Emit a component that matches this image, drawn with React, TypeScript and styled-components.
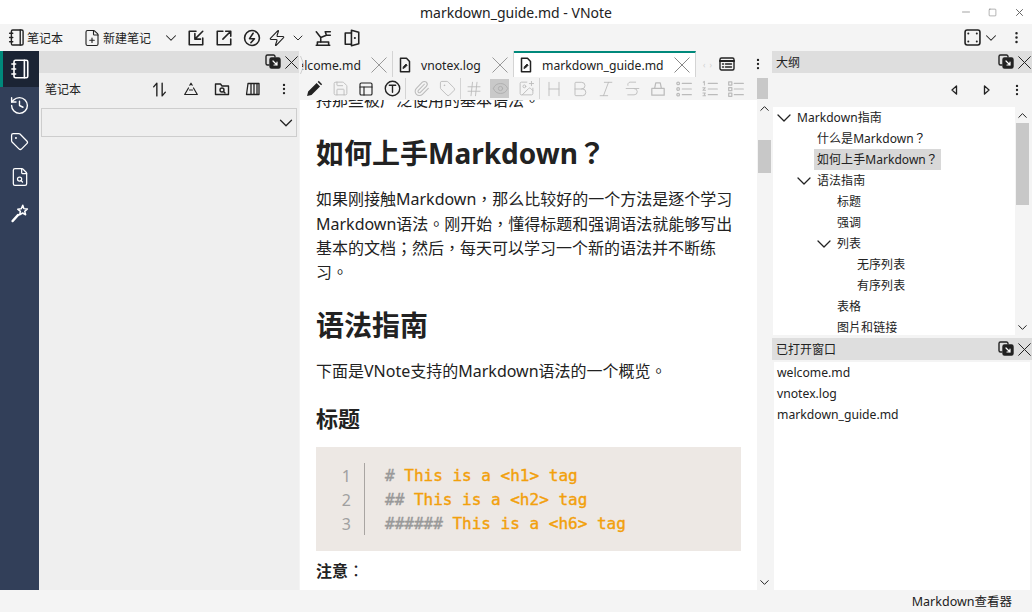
import * as React from "react";
import styled, { createGlobalStyle } from "styled-components";
import {
  ChevronDown,
  ChevronUp,
  EllipsisVertical,
  Eye,
  FilePlus,
  Hash,
  ImagePlus,
  Minus,
  Paperclip,
  Save,
  Square,
  Tag,
  Zap,
  History,
  FileSearch,
  PanelsTopLeft,
  Strikethrough,
  Italic,
  Bold,
  Heading,
} from "lucide-react";

const GlobalStyle = createGlobalStyle`
  html, body {
    margin: 0;
    padding: 0;
    width: 1032px;
    height: 612px;
    overflow: hidden;
    background: #f4f4f4;
    font-family: "Noto Sans", "Noto Sans CJK TC", sans-serif;
    color: #222;
  }
  svg {
    flex: none;
  }
`;

const Window = styled.div`
  width: 1032px;
  height: 612px;
  display: flex;
  flex-direction: column;
  overflow: hidden;
`;

const TitleBar = styled.div`
  position: relative;
  height: 24px;
  flex: none;
  background: #fff;
  display: flex;
  align-items: center;
  justify-content: center;
  font-size: 14px;
`;

const WindowButtons = styled.div`
  position: absolute;
  right: -1px;
  top: 3px;
  display: flex;
  color: #666;
`;

const WindowButton = styled.span`
  width: 27px;
  height: 18px;
  display: flex;
  align-items: center;
  justify-content: center;
`;

const ToolBar = styled.div`
  height: 27px;
  flex: none;
  display: flex;
  align-items: center;
  padding-left: 8px;
  color: #222;
`;

const ToolText = styled.span`
  font-size: 12px;
  margin-left: 2px;
  white-space: nowrap;
`;

const ToolSlot = styled.span<{ $w?: number; $ml?: number }>`
  width: ${(p) => p.$w ?? 28}px;
  margin-left: ${(p) => p.$ml ?? 0}px;
  flex: none;
  display: flex;
  align-items: center;
  justify-content: center;
`;

const Spacer = styled.div`
  flex: 1;
`;

const Main = styled.div`
  flex: 1;
  min-height: 0;
  display: flex;
`;

const ActivityBar = styled.div`
  width: 39px;
  flex: none;
  background: #323f59;
  display: flex;
  flex-direction: column;
`;

const ActivityItem = styled.div<{ $active?: boolean }>`
  height: 36px;
  flex: none;
  display: flex;
  align-items: center;
  justify-content: center;
  color: #fff;
  background: ${(p) => (p.$active ? "#1b2434" : "transparent")};
  border-left: 3px solid ${(p) => (p.$active ? "#00897b" : "transparent")};
  padding-right: 3px;
  box-sizing: border-box;
`;

const NavDock = styled.div`
  width: 260px;
  flex: none;
  background: #efefef;
  display: flex;
  flex-direction: column;
  margin-right: 1px;
`;

const DockHeader = styled.div`
  height: 22px;
  flex: none;
  background: #dedede;
  display: flex;
  align-items: center;
  padding-left: 4px;
  font-size: 12px;
  color: #222;
`;

const DockTitle = styled.span`
  flex: 1;
`;

const DockAction = styled.span`
  width: 18px;
  flex: none;
  display: flex;
  justify-content: center;
  &:last-child {
    margin-right: -1px;
  }
`;

const NavTools = styled.div`
  height: 35px;
  flex: none;
  box-sizing: border-box;
  display: flex;
  align-items: center;
  padding: 0 0 3px 6px;
  font-size: 12px;
`;

const NavLabel = styled.span`
  flex: 1;
`;

const NavTool = styled.span`
  width: 31px;
  flex: none;
  display: flex;
  justify-content: center;
`;

const Combo = styled.div`
  height: 27px;
  margin: 0 2px;
  border: 1px solid #cdcdcd;
  display: flex;
  align-items: center;
  justify-content: flex-end;
  svg {
    margin-right: -1px;
  }
`;

const EditorArea = styled.div`
  width: 472px;
  flex: none;
  display: flex;
  flex-direction: column;
  overflow: hidden;
`;

const TabBar = styled.div`
  position: relative;
  height: 26px;
  flex: none;
  display: flex;
  overflow: hidden;
`;

const EditorTab = styled.div<{ $active?: boolean; $width: number }>`
  width: ${(p) => p.$width}px;
  flex: none;
  display: flex;
  align-items: center;
  box-sizing: border-box;
  padding: ${(p) => (p.$active ? "0" : "2px")} 5px 0 4px;
  background: ${(p) => (p.$active ? "#fff" : "#f4f4f4")};
  border-top: ${(p) => (p.$active ? "2px solid #00897b" : "0")};
  border-right: 1px solid #d4d4d4;
  font-size: 12.2px;
  color: #222;
`;

const TabName = styled.span`
  flex: 1;
  min-width: 0;
  white-space: nowrap;
  padding-left: 8px;
`;

const ClippedTabName = styled.span`
  flex: 1;
  min-width: 0;
  margin-left: -4px;
  padding-right: 10px;
  display: flex;
  justify-content: flex-end;
  overflow: hidden;
  white-space: nowrap;
`;

const TabScrollHint = styled.span`
  position: absolute;
  left: 0;
  top: 0;
  width: 2px;
  height: 26px;
  background: #f4f4f4;
  color: #cfcfcf;
  svg {
    position: absolute;
    left: 0;
    top: 4px;
  }
`;

const TabTail = styled.div`
  flex: 1;
  display: flex;
  align-items: center;
  color: #222;
`;

const FaintArrows = styled.span`
  width: 23px;
  flex: none;
  display: flex;
  justify-content: center;
  gap: 4px;
  font-size: 8px;
  color: #d0d0d0;
`;

const EditorToolBar = styled.div`
  height: 23px;
  flex: none;
  display: flex;
  align-items: center;
  padding-left: 1px;
  background: #f4f4f4;
`;

const EdButton = styled.span<{ $on?: boolean; $faint?: boolean }>`
  width: 26px;
  height: 19px;
  flex: none;
  display: flex;
  align-items: center;
  justify-content: center;
  color: ${(p) => (p.$faint ? "#bbb" : "#222")};
  position: relative;
  &::before {
    content: "";
    position: absolute;
    left: 3px;
    right: 4px;
    top: 0;
    bottom: 0;
    background: ${(p) => (p.$on ? "#c9c9c9" : "transparent")};
  }
  svg {
    position: relative;
  }
`;

const EdSep = styled.span<{ $gap: number }>`
  width: 1px;
  height: 21px;
  flex: none;
  background: #d4d4d4;
  margin-right: ${(p) => p.$gap}px;
`;

const ToolThumb = styled.span`
  margin-left: auto;
  width: 11px;
  height: 21px;
  margin-right: 4px;
  background: #c8c8c8;
`;

const EditorBody = styled.div`
  flex: 1;
  min-height: 0;
  display: flex;
`;

const Page = styled.div`
  flex: 1;
  background: #fff;
  overflow: hidden;
  padding: 0 16px;
  color: #222;
  font-size: 16px;
  line-height: 24.3px;
`;

const PageInner = styled.div`
  margin-top: -12px;
`;

const Para = styled.p`
  margin: 0 0 16px;
`;

const H1 = styled.h1`
  font-size: 28px;
  line-height: 38px;
  font-weight: 700;
  margin: 22px 0 15px;
`;

const H2 = styled.h2`
  font-size: 22px;
  line-height: 30px;
  font-weight: 700;
  margin: 19px 0 14px;
`;

const CodeBlock = styled.div`
  background: #ede8e4;
  height: 104px;
  box-sizing: border-box;
  padding-top: 16px;
  display: flex;
  margin-bottom: 8px;
`;

const LineNumbers = styled.div`
  width: 49px;
  height: 72px;
  box-sizing: border-box;
  padding: 1px 13px 0 0;
  border-right: 1px solid #a9a5a2;
  text-align: right;
  color: #a0a0a0;
  font-size: 16px;
  line-height: 24px;
`;

const CodeLines = styled.div`
  padding: 1px 0 0 20px;
  font-family: "DejaVu Sans Mono", monospace;
  font-size: 16px;
  line-height: 24px;
  color: #f2a00c;
  -webkit-text-stroke: 0.4px currentColor;
  white-space: pre;
`;

const Hashes = styled.span`
  color: #999;
`;

const Scroller = styled.div`
  width: 15px;
  flex: none;
  background: #f4f4f4;
  display: flex;
  flex-direction: column;
  align-items: center;
  color: #222;
  overflow: hidden;
`;

const ScrollArrow = styled.span`
  height: 16px;
  flex: none;
  display: flex;
  align-items: center;
`;

const ScrollThumb = styled.span<{ $top: number; $h: number }>`
  width: 13px;
  height: ${(p) => p.$h}px;
  margin-top: ${(p) => p.$top}px;
  flex: none;
  background: #c8c8c8;
`;

const ScrollFill = styled.span`
  flex: 1;
`;

const RightColumn = styled.div`
  flex: 1;
  min-width: 0;
  display: flex;
  flex-direction: column;
`;

const OutlineTools = styled.div`
  height: 34px;
  flex: none;
  display: flex;
  align-items: center;
  justify-content: flex-end;
  color: #222;
`;

const OutlineTool = styled.span`
  width: 31px;
  flex: none;
  display: flex;
  justify-content: center;
`;

const OutlineBody = styled.div`
  height: 228px;
  flex: none;
  margin-left: 1px;
  margin-right: 2px;
  display: flex;
  background: #fff;
`;

const Tree = styled.div`
  flex: 1;
  overflow: hidden;
  font-size: 12px;
`;

const TreeRow = styled.div<{ $level: number }>`
  height: 21px;
  display: flex;
  align-items: center;
  padding-left: ${(p) => 4 + p.$level * 20}px;
  color: #222;
`;

const TreeCaret = styled.span`
  width: 20px;
  flex: none;
  display: flex;
  margin-left: -1px;
  svg {
    margin-left: -4px;
  }
`;

const TreeLabel = styled.span<{ $selected?: boolean }>`
  padding: 0 3px;
  margin-left: -2px;
  height: 21px;
  line-height: 21px;
  background: ${(p) => (p.$selected ? "#d8d8d8" : "transparent")};
  white-space: nowrap;
  letter-spacing: 0.05px;
`;

const OpenDock = styled.div`
  flex: 1;
  margin-top: 3px;
  display: flex;
  flex-direction: column;
`;

const OpenList = styled.div`
  flex: 1;
  background: #fff;
  margin: 2px 2px 0 2px;
  font-size: 12.2px;
  padding-left: 3px;
`;

const OpenItem = styled.div`
  height: 21px;
  line-height: 21px;
  color: #222;
`;

const StatusBar = styled.div`
  height: 22px;
  flex: none;
  display: flex;
  align-items: center;
  justify-content: flex-end;
  padding: 0 20px 2px 0;
  box-sizing: border-box;
  font-size: 12.5px;
  color: #222;
`;

const Glyph: React.FC<{ size?: number; sw?: number; children: React.ReactNode }> = ({
  size = 16,
  sw = 1.4,
  children,
}) => (
  <svg
    width={size}
    height={size}
    viewBox="0 0 16 16"
    fill="none"
    stroke="currentColor"
    strokeWidth={sw}
    strokeLinecap="round"
    strokeLinejoin="round"
  >
    {children}
  </svg>
);

const CrossIcon: React.FC<{ size: number; color?: string }> = ({ size, color = "#222" }) => (
  <svg width={size} height={size} viewBox="0 0 16 16" stroke={color} strokeWidth={16 / size} fill="none">
    <path d="M.5 .5l15 15M15.5 .5l-15 15" />
  </svg>
);

const NotebookIcon: React.FC<{ size: number }> = ({ size }) => (
  <Glyph size={size} sw={1.3}>
    <rect x="3.2" y="1" width="11" height="14" rx="1.2" />
    <path d="M11.5 1v14M1.5 4h3M1.5 8h3M1.5 12h3" />
  </Glyph>
);

const WandIcon = () => (
  <Glyph size={20} sw={1.2}>
    <path d="M10.2 1.8l.9 2.7 2.8.3-2.1 1.9.7 2.7-2.4-1.4-2.4 1.5.6-2.8-2.1-1.8 2.8-.3z" />
    <path d="M6.5 9.5l-4.5 5" strokeWidth="1.8" />
  </Glyph>
);

const FloatIcon = () => (
  <Glyph>
    <path d="M10 3V2.5A1.5 1.5 0 0 0 8.5 1h-6A1.5 1.5 0 0 0 1 2.5v7A1.5 1.5 0 0 0 2.5 11H4" />
    <rect x="5" y="4" width="10" height="10" rx="1.5" fill="currentColor" />
    <path d="M8 7l4 4M12 8v3H9" stroke="#fff" strokeWidth="1.2" />
  </Glyph>
);

const DockButtons = () => (
  <>
    <DockAction>
      <FloatIcon />
    </DockAction>
    <DockAction>
      <CrossIcon size={13} />
    </DockAction>
  </>
);

const FileIcon = () => (
  <Glyph>
    <path d="M3.5 1.2h6L12.5 4.5v10.3h-9z" strokeWidth="1.5" />
    <path d="M6 11.2l.3-1.5L9 7l1.2 1.2-2.7 2.7z" fill="currentColor" strokeWidth=".8" />
  </Glyph>
);

const ImportIcon = () => (
  <Glyph size={18}>
    <path d="M8 2H2v12h12V8" />
    <path d="M14 2L7 9M7 4v5h5" />
  </Glyph>
);

const ExportIcon = () => (
  <Glyph size={18}>
    <path d="M7 2H2v12h12V9" />
    <path d="M7 9l7-7M9.5 2H14v4.5" />
  </Glyph>
);

const FlashCircle = () => (
  <Glyph size={18}>
    <circle cx="8" cy="8" r="6.6" />
    <path d="M9 3.8L5.8 8.6h4.4L7 12.2" />
  </Glyph>
);

const FlowIcon = () => (
  <Glyph size={18}>
    <path d="M2 2.5l4 5v4M6 7.5l5-2M11 5.5l-1-3h4.5M11 5.5h3.5" />
    <path d="M2 14.5h12M3 14.5v-3h10v3" />
  </Glyph>
);

const DoorIcon = () => (
  <Glyph size={18}>
    <path d="M7.5 3.5H2v10h5.5" />
    <path d="M7.5 1.2l6.5 1.600v10.400l-6.500 1.600z" />
    <path d="M10.500 8h.1" strokeWidth="1.8" />
  </Glyph>
);

const FullIcon = () => (
  <Glyph size={17} sw={1.5}>
    <rect x="1" y="1" width="14" height="14" rx="2" />
    <path d="M4 4.2h.1M12 4.2h.1M4 11.8h.1M12 11.8h.1" strokeWidth="1.8" />
  </Glyph>
);

const ListWindowIcon = () => (
  <Glyph size={16} sw={1.4}>
    <rect x="1" y="2" width="14" height="12" rx="1.5" />
    <path d="M1 5h14" strokeWidth="2" />
    <path d="M3.5 8h1M6.5 8h6M3.5 11h1M6.5 11h6" />
  </Glyph>
);

const TriangleIcon = () => (
  <Glyph sw={1.2}>
    <path d="M6.8 4.2L8 2.2l1.2 2M10.5 7l3.8 6.5H1.7L5.5 7M6.5 9h3" />
  </Glyph>
);

const FolderSearch = () => (
  <Glyph>
    <path d="M1.5 3h5L8 5h6.5v8.500h-13z" />
    <circle cx="8" cy="9" r="2" />
    <path d="M9.5 10.5L11 12" />
  </Glyph>
);

const BooksIcon = () => (
  <Glyph sw={1.3}>
    <path d="M1.5 13.5L3 2.5h11v11zM6 2.5v11M9 2.5v11M12 2.5v11" />
  </Glyph>
);

const SortIcon = () => (
  <Glyph size={17} sw={1.3}>
    <path d="M5.5 14V2L2.5 5.5M10.5 2v12l3-3.500" />
  </Glyph>
);

const LeftMark = () => (
  <Glyph size={12}>
    <path d="M10 2.5v11L4 8z" strokeWidth="1.8" />
  </Glyph>
);

const RightMark = () => (
  <Glyph size={12}>
    <path d="M6 2.5v11L12 8z" strokeWidth="1.8" />
  </Glyph>
);

const TextCircle = () => (
  <Glyph size={17} sw={1.3}>
    <circle cx="8" cy="8" r="6.8" />
    <path d="M5 5h6M8 5v6.5" />
  </Glyph>
);

const PencilFilled = () => (
  <svg width="17" height="17" viewBox="0 0 16 16" fill="currentColor">
    <path d="M1 15l1-4.200L10 2.800l3.200 3.200-8 8zM11 1.800l1-1 3.200 3.200-1 1z" />
  </svg>
);

const EraseIcon = () => (
  <Glyph size={18} sw={1.1}>
    <path d="M5 7.5L6 2.500h4l1 5M2.500 7.500h11v6h-11z" />
  </Glyph>
);

const BulletList = () => (
  <Glyph size={18} sw={1.1}>
    <circle cx="2.8" cy="3" r="1.2" />
    <circle cx="2.8" cy="8" r="1.2" />
    <circle cx="2.8" cy="13" r="1.2" />
    <path d="M6.5 3h8M6.5 8h8M6.5 13h8" />
  </Glyph>
);

const NumberList = () => (
  <Glyph size={18} sw={1.1}>
    <path d="M2 2l1-.8v3.300M1.600 6.800h2.200L1.700 9.200h2.300M1.700 11.500h2.200l-1 1.200 1 1.300H1.700" strokeWidth=".9" />
    <path d="M6.5 3h8M6.5 8h8M6.5 13h8" />
  </Glyph>
);

const CheckList = () => (
  <Glyph size={18} sw={1.1}>
    <rect x="1.5" y="1.7" width="2.8" height="2.8" />
    <rect x="1.5" y="6.7" width="2.8" height="2.8" />
    <rect x="1.5" y="11.7" width="2.8" height="2.8" />
    <path d="M6.5 3h8M6.5 8h8M6.5 13h8" />
  </Glyph>
);

const outline = [
  { level: 0, text: "Markdown指南", caret: true },
  { level: 1, text: "什么是Markdown？" },
  { level: 1, text: "如何上手Markdown？", selected: true },
  { level: 1, text: "语法指南", caret: true },
  { level: 2, text: "标题" },
  { level: 2, text: "强调" },
  { level: 2, text: "列表", caret: true },
  { level: 3, text: "无序列表" },
  { level: 3, text: "有序列表" },
  { level: 2, text: "表格" },
  { level: 2, text: "图片和链接" },
];

export default function App() {
  return (
    <Window>
      <GlobalStyle />
      <TitleBar>
        markdown_guide.md - VNote
        <WindowButtons>
          <WindowButton>
            <Minus size={12} strokeWidth={1.2} />
          </WindowButton>
          <WindowButton>
            <Square size={9} strokeWidth={1.3} />
          </WindowButton>
          <WindowButton>
            <CrossIcon size={7} color="#666" />
          </WindowButton>
        </WindowButtons>
      </TitleBar>

      <ToolBar>
        <NotebookIcon size={17} />
        <ToolText>笔记本</ToolText>
        <ToolSlot $w={20} />
        <FilePlus size={18} strokeWidth={1.5} />
        <ToolText>新建笔记</ToolText>
        <ToolSlot $w={23} $ml={8}>
          <ChevronDown size={18} strokeWidth={1.4} />
        </ToolSlot>
        <ToolSlot>
          <ImportIcon />
        </ToolSlot>
        <ToolSlot>
          <ExportIcon />
        </ToolSlot>
        <ToolSlot>
          <FlashCircle />
        </ToolSlot>
        <ToolSlot $w={22}>
          <Zap size={18} strokeWidth={1.5} />
        </ToolSlot>
        <ToolSlot $w={20}>
          <ChevronDown size={16} strokeWidth={1.4} />
        </ToolSlot>
        <ToolSlot $w={30}>
          <FlowIcon />
        </ToolSlot>
        <ToolSlot>
          <DoorIcon />
        </ToolSlot>
        <Spacer />
        <ToolSlot $w={20}>
          <FullIcon />
        </ToolSlot>
        <ToolSlot $w={18}>
          <ChevronDown size={18} strokeWidth={1.4} />
        </ToolSlot>
        <ToolSlot $w={32}>
          <EllipsisVertical size={15} strokeWidth={2} />
        </ToolSlot>
      </ToolBar>

      <Main>
        <ActivityBar>
          <ActivityItem $active>
            <NotebookIcon size={20} />
          </ActivityItem>
          <ActivityItem>
            <History size={21} strokeWidth={1.6} />
          </ActivityItem>
          <ActivityItem>
            <Tag size={19} strokeWidth={1.6} />
          </ActivityItem>
          <ActivityItem>
            <FileSearch size={20} strokeWidth={1.5} />
          </ActivityItem>
          <ActivityItem>
            <WandIcon />
          </ActivityItem>
        </ActivityBar>

        <NavDock>
          <DockHeader>
            <DockTitle />
            <DockButtons />
          </DockHeader>
          <NavTools>
            <NavLabel>笔记本</NavLabel>
            <NavTool>
              <SortIcon />
            </NavTool>
            <NavTool>
              <TriangleIcon />
            </NavTool>
            <NavTool>
              <FolderSearch />
            </NavTool>
            <NavTool>
              <BooksIcon />
            </NavTool>
            <NavTool>
              <EllipsisVertical size={14} strokeWidth={2} />
            </NavTool>
          </NavTools>
          <Combo>
            <ChevronDown size={22} strokeWidth={1.4} />
          </Combo>
        </NavDock>

        <EditorArea>
          <TabBar>
            <EditorTab $width={93}>
              <ClippedTabName>welcome.md</ClippedTabName>
              <CrossIcon size={16} color="#999" />
            </EditorTab>
            <EditorTab $width={121}>
              <FileIcon />
              <TabName>vnotex.log</TabName>
              <CrossIcon size={16} color="#999" />
            </EditorTab>
            <EditorTab $active $width={182}>
              <FileIcon />
              <TabName>markdown_guide.md</TabName>
              <CrossIcon size={16} color="#888" />
            </EditorTab>
            <TabTail>
              <FaintArrows>
                <span>‹</span>
                <span>›</span>
              </FaintArrows>
              <ListWindowIcon />
              <ToolSlot $w={46}>
                <EllipsisVertical size={14} strokeWidth={2} />
              </ToolSlot>
            </TabTail>
            <TabScrollHint>
              <svg width="5" height="20" viewBox="0 0 5 20" fill="none" stroke="currentColor">
                <path d="M.5 1L4 10 .5 19" />
              </svg>
            </TabScrollHint>
          </TabBar>

          <EditorToolBar>
            <EdButton>
              <PencilFilled />
            </EdButton>
            <EdButton $faint>
              <Save size={17} strokeWidth={1.3} />
            </EdButton>
            <EdButton>
              <PanelsTopLeft size={16} strokeWidth={1.7} />
            </EdButton>
            <EdButton>
              <TextCircle />
            </EdButton>
            <EdSep $gap={2} />
            <EdButton $faint>
              <Paperclip size={17} strokeWidth={1.5} />
            </EdButton>
            <EdButton $faint>
              <Tag size={17} strokeWidth={1.3} />
            </EdButton>
            <EdSep $gap={0} />
            <EdButton $faint>
              <Hash size={18} strokeWidth={1.2} />
            </EdButton>
            <EdButton $faint $on>
              <Eye size={17} strokeWidth={1.3} color="#adadad" />
            </EdButton>
            <EdButton $faint>
              <ImagePlus size={17} strokeWidth={1.3} />
            </EdButton>
            <EdSep $gap={1} />
            <EdButton $faint>
              <Heading size={20} strokeWidth={1.1} />
            </EdButton>
            <EdButton $faint>
              <Bold size={20} strokeWidth={1.1} />
            </EdButton>
            <EdButton $faint>
              <Italic size={20} strokeWidth={1.1} />
            </EdButton>
            <EdButton $faint>
              <Strikethrough size={19} strokeWidth={1.1} />
            </EdButton>
            <EdButton $faint>
              <EraseIcon />
            </EdButton>
            <EdButton $faint>
              <BulletList />
            </EdButton>
            <EdButton $faint>
              <NumberList />
            </EdButton>
            <EdButton $faint>
              <CheckList />
            </EdButton>
            <ToolThumb />
          </EditorToolBar>

          <EditorBody>
            <Page>
              <PageInner>
                <Para>持那些被广泛使用的基本语法。</Para>
                <H1>如何上手Markdown？</H1>
                <Para>
                  如果刚接触Markdown，那么比较好的一个方法是逐个学习Markdown语法。刚开始，懂得标题和强调语法就能够写出基本的文档；然后，每天可以学习一个新的语法并不断练习。
                </Para>
                <H1>语法指南</H1>
                <Para>下面是VNote支持的Markdown语法的一个概览。</Para>
                <H2>标题</H2>
                <CodeBlock>
                  <LineNumbers>
                    1
                    <br />2
                    <br />3
                  </LineNumbers>
                  <CodeLines>
                    <Hashes>#</Hashes> This is a &lt;h1&gt; tag
                    <br />
                    <Hashes>##</Hashes> This is a &lt;h2&gt; tag
                    <br />
                    <Hashes>######</Hashes> This is a &lt;h6&gt; tag
                  </CodeLines>
                </CodeBlock>
                <Para>
                  <strong>注意</strong>：
                </Para>
              </PageInner>
            </Page>
            <Scroller>
              <ScrollArrow>
                <ChevronUp size={15} strokeWidth={1.6} />
              </ScrollArrow>
              <ScrollThumb $top={24} $h={33} />
              <ScrollFill />
              <ScrollArrow>
                <ChevronDown size={15} strokeWidth={1.6} />
              </ScrollArrow>
            </Scroller>
          </EditorBody>
        </EditorArea>

        <RightColumn>
          <DockHeader>
            <DockTitle>大纲</DockTitle>
            <DockButtons />
          </DockHeader>
          <OutlineTools>
            <OutlineTool>
              <LeftMark />
            </OutlineTool>
            <OutlineTool>
              <RightMark />
            </OutlineTool>
            <OutlineTool>
              <EllipsisVertical size={14} strokeWidth={2} />
            </OutlineTool>
          </OutlineTools>
          <OutlineBody>
            <Tree>
              {outline.map((row) => (
                <TreeRow key={row.text} $level={row.level}>
                  <TreeCaret>{row.caret && <ChevronDown size={24} strokeWidth={1.3} />}</TreeCaret>
                  <TreeLabel $selected={row.selected}>{row.text}</TreeLabel>
                </TreeRow>
              ))}
            </Tree>
            <Scroller>
              <ScrollArrow>
                <ChevronUp size={15} strokeWidth={1.6} />
              </ScrollArrow>
              <ScrollThumb $top={0} $h={82} />
              <ScrollFill />
              <ScrollArrow>
                <ChevronDown size={15} strokeWidth={1.6} />
              </ScrollArrow>
            </Scroller>
          </OutlineBody>
          <OpenDock>
            <DockHeader>
              <DockTitle>已打开窗口</DockTitle>
              <DockButtons />
            </DockHeader>
            <OpenList>
              <OpenItem>welcome.md</OpenItem>
              <OpenItem>vnotex.log</OpenItem>
              <OpenItem>markdown_guide.md</OpenItem>
            </OpenList>
          </OpenDock>
        </RightColumn>
      </Main>

      <StatusBar>Markdown查看器</StatusBar>
    </Window>
  );
}
